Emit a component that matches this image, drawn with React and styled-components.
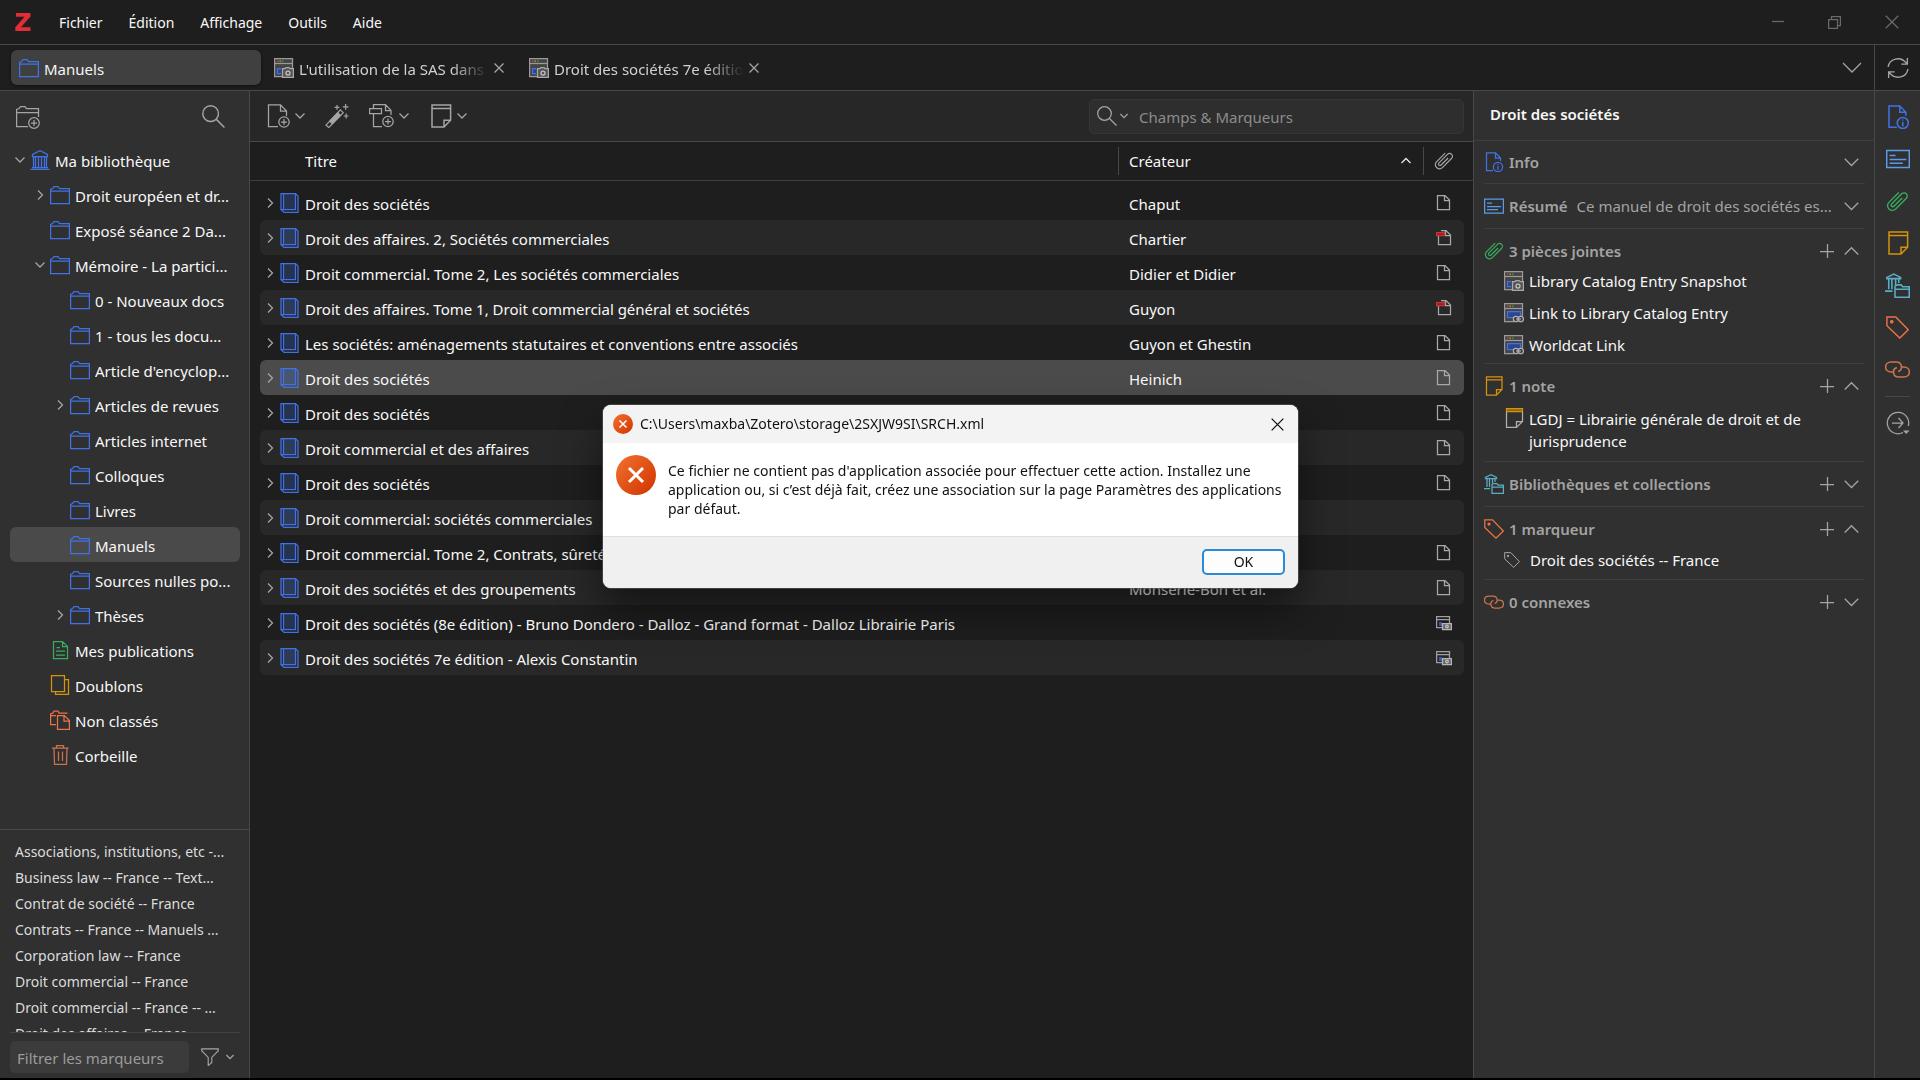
import React from "react";
import styled, { createGlobalStyle, css } from "styled-components";

const BLUE = "#4072e5";
const LIGHT_BLUE = "#5a9ae6";
const GREEN = "#39ac5e";
const YELLOW = "#d5920b";
const TEAL = "#59adc4";
const ORANGE = "#ec7147";
const BROWN = "#c9744b";
const GREY = "#a5a5a5";

const GlobalStyle = createGlobalStyle`
  * {
    box-sizing: border-box;
  }
  body {
    margin: 0;
    background: #000;
    color: #f8f8f8;
    font-family: "Noto Sans", "Open Sans", sans-serif;
    font-size: 15px;
    line-height: 22px;
  }
  button,
  input {
    font: inherit;
    color: inherit;
  }
  button {
    padding: 0;
    border: 0;
    background: none;
    text-align: left;
  }
  ul {
    margin: 0;
    padding: 0;
    list-style: none;
  }
`;

/* ---------- icons ---------- */

const Svg = styled.svg`
  flex: none;
  display: block;
  fill: none;
  stroke: currentColor;
  stroke-width: 1.25;
`;

const Icon = ({ size = 20, color, box = 20, children }) => (
  <Svg width={size} height={size} viewBox={`0 0 ${box} ${box}`} color={color} aria-hidden="true">
    {children}
  </Svg>
);

const FolderIcon = () => (
  <Icon color={BLUE}>
    <path d="M.6 18.5V4.5L2.5 3.5L4 1.5H8L9.5 3.5H19.4V18.5zM.6 6H19.4" />
  </Icon>
);

const FolderPlusIcon = () => (
  <Icon size={24} box={24} color={GREY}>
    <path d="M12 21.5H.6V4.5L3 3.5L4.5 1.5H9L10.5 3.5H22.5V12M.6 7.5H22.5" />
    <circle cx="18" cy="18" r="5.3" />
    <path d="M18 15v6M15 18h6" />
  </Icon>
);

const LibraryIcon = () => (
  <Icon color={BLUE}>
    <path d="M.5 19.4H19.5M2 17.5H18M2.5 6.5V4.5L10 .8L17.5 4.5V6.5zM3.5 6.5V17M5.5 6.5V17M8.5 6.5V17M11.5 6.5V17M14.5 6.5V17M16.5 6.5V17" />
  </Icon>
);

const BookIcon = () => (
  <Icon color={BLUE}>
    <path d="M3.5 .6H15.5V16.5H3.5z" fill="#4072e5" fillOpacity=".25" stroke="none" />
    <path d="M1 .6H15.5V16.5H1zM3.5.6V16.5M1 16.5L4 19.4H18V3L15.5 .6" />
  </Icon>
);

const PublicationsIcon = () => (
  <Icon color={GREEN}>
    <path d="M3.5 1.5H12.5L17.5 6.5V18.5H3.5zM12.5 1.5V6.5H17.5M6.5 7.5H10M6 11H15M6 15H15" />
  </Icon>
);

const DuplicatesIcon = () => (
  <Icon color={YELLOW}>
    <path d="M1.5.6H14.5V16.5H1.5zM14.5 4.5H18.5V19.4H5.5V16.5" />
  </Icon>
);

const UnfiledIcon = () => (
  <Icon color={ORANGE}>
    <path d="M6 14.5H.6V4L3 3L4 1H8L9 3H17.5M.6 5.5H6M7.5 5.5H14.5L19.4 10.5V19.4H7.5zM14 5.5V11H19.5" />
  </Icon>
);

const TrashIcon = () => (
  <Icon color={BROWN}>
    <path d="M2 3H18.5M6.5 3V.6H13.5V3M4 3.5L4.5 19.4H16.5L17 3.5M8.5 6.5V16M12.5 6.5V16" />
  </Icon>
);

const WindowShape = () => (
  <>
    <path d="M.6.6H18.5V18.5H.6z" fill="#444" stroke="#9a9a9a" />
    <path d="M.5 5.5H18.5" stroke="#9a9a9a" />
    <path d="M3 3H4.5" stroke="#e0403a" />
    <path d="M5.5 3H7" stroke="#d8a000" />
    <path d="M8 3H9.5" stroke="#35a34a" />
  </>
);

const SnapshotIcon = () => (
  <Icon>
    <WindowShape />
    <path d="M7 10.5H3.5V15.5H7" stroke={BLUE} fill="#2c478c" />
    <path d="M8.5 10.5H11L12 9.5H15L16 10.5H19.4V19.4H8.5z" fill="#555" stroke="#a9a9a9" />
    <circle cx="14" cy="15" r="2" stroke="#c4c4c4" />
  </Icon>
);

const WebLinkIcon = () => (
  <Icon>
    <WindowShape />
    <path d="M3.5 8.5H16.5V14.5H3.5z" stroke={BLUE} fill="#2c478c" />
    <path d="M10 13.5H19.5V19.5H10z" fill="#333" stroke="none" />
    <circle cx="12" cy="16" r="2.6" stroke="#b0b0b0" />
    <circle cx="16.8" cy="16" r="2.6" stroke="#b0b0b0" />
    <path d="M12 16h5" stroke="#b0b0b0" />
  </Icon>
);

const SmallSnapshotIcon = () => (
  <Icon size={16} box={16}>
    <path d="M.6 1.5H13.5V12.5H.6zM.6 4.5H13.5" stroke="#a0a0a0" />
    <path d="M3 7H6V11H3z" fill="#3458b5" stroke="none" />
    <path d="M6.5 8.5H15.4V14.5H6.5z" fill="#666" stroke="#b5b5b5" />
    <circle cx="11" cy="11.5" r="1.3" stroke="#c4c4c4" />
  </Icon>
);

const FileIcon = () => (
  <Icon size={16} box={16} color="#a8a8a8">
    <path d="M1.5.6H9L13.5 5V14.5H1.5zM8.5 .6V5.5H13.5" />
  </Icon>
);

const PdfIcon = () => (
  <Icon size={16} box={16} color="#a8a8a8">
    <path d="M2.5 6V14.5H14.5V5L10 .6H5M9.5 .6V5.5H14.5" />
    <path d="M.6 2.5H8.5V5.5H.6z" stroke="#cf3038" fill="#8c2228" />
  </Icon>
);

const InfoIcon = ({ size }) => (
  <Icon size={size} color={BLUE}>
    <path d="M9 18.5H2.5V.8H11.5L16.5 6V9M11.5 .8V6H16.5" />
    <circle cx="14" cy="15" r="4.6" />
    <path d="M14 14v4M14 12v1" />
  </Icon>
);

const AbstractIcon = ({ size }) => (
  <Icon size={size} color={LIGHT_BLUE}>
    <path d="M.6 3H19.4V17H.6zM3 7H8M3 10.5H17M3 13.5H14" />
  </Icon>
);

const ClipIcon = ({ size, color = GREEN }) => (
  <Icon size={size} color={color}>
    <path d="M14.5 7.5L7.2 14.8C5.6 16.4 3.4 14.2 5 12.6L13.8 3.8C16.8.8 21 5 18 8L8.8 17.2C4.6 21.4-1.6 15.4 2.6 11.2L11.4 2.4" transform="translate(.2 -.2) scale(.96)" />
  </Icon>
);

const NoteIcon = ({ size, color = YELLOW }) => (
  <Icon size={size} color={color}>
    <path d="M2.5.8H18V13.5L12.5 19.2H2.5zM2.5 3.8H18M18 13.5H12.5V19.2" />
  </Icon>
);

const NoteItemIcon = () => (
  <Icon color="#b0b0b0">
    <path d="M2.5 4V19.4H12.5L18.5 13.5V4M18.5 13.5H12.5V19.4" />
    <path d="M2.5 .6H18.5V3.5H2.5z" fill="#8a6414" stroke={YELLOW} />
  </Icon>
);

const CollectionsIcon = ({ size }) => (
  <Icon size={size} color={TEAL}>
    <path d="M0 14.5H6M1.5 4.5V3.5L7 .8L12.5 3.5V4.5zM3 5V13M5.5 5V13M8.5 5V9.5M11 5V8" />
    <path d="M8 19.4V10.5L10 9.5H13L14 11H19.4V19.4zM8 13H19.4" />
  </Icon>
);

const TagIcon = ({ size, color = ORANGE }) => (
  <Icon size={size} color={color}>
    <path d="M.8.8H8.5L19.3 12L12 19.2L.8 8.5z" />
    <circle cx="5" cy="5" r="1" fill="currentColor" />
  </Icon>
);

const LinkedIcon = ({ size }) => (
  <Icon size={size} color={BROWN}>
    <path d="M6.5 12H5C-1 12-1 4 5 4H9C14 4 14.5 10.5 10.5 11.5M13.5 8H15C21 8 21 16 15 16H11C6 16 5.5 9.5 9.5 8.5" />
  </Icon>
);

const LocateIcon = () => (
  <Icon size={24} box={24} color={GREY}>
    <path d="M17 21.5A10.7 10.7 0 1 1 22.3 15M6 12H17M12.5 7L17 12L12.5 17" />
    <path d="M17 19.5H23.5L20.2 23z" fill="currentColor" stroke="none" />
  </Icon>
);

const SyncIcon = () => (
  <Icon size={22} color={GREY}>
    <path d="M1 9C2 2 12-2 18 6M18.5 1V6.5H13M19 11C18 18 8 22 2 14M1.5 19V13.5H7" />
  </Icon>
);

const SearchIcon = ({ size = 20, color = GREY }) => (
  <Icon size={size} color={color}>
    <circle cx="7.5" cy="7.5" r="6.8" />
    <path d="M12.5 12.5L19.5 19.5" />
  </Icon>
);

const AddItemIcon = () => (
  <Icon size={24} box={24} color={GREY}>
    <path d="M11 22.5H1.5V.8H13.5L19.5 7V12M13.5 .8V7H19.5" />
    <circle cx="17" cy="18" r="5.2" />
    <path d="M17 15v6M14 18h6" />
  </Icon>
);

const WandIcon = () => (
  <Icon size={24} box={25} color={GREY}>
    <path d="M1 22L16 6L19 9L4 24.4z" />
    <path d="M5 18L13.5 9L16 12L7.5 20.5z" fill="currentColor" />
    <path d="M12.5 1v5M10 3.5h5M21.5 0v6M18.5 3h6M22 10v5M19.5 12.5h5" />
  </Icon>
);

const AddAttachmentIcon = () => (
  <Icon size={26} box={26} color={GREY}>
    <path d="M.6 5.5H12.5V10.5H.6zM4.5 5V1.5H16.5L22 7.5V12M16.5 1.5V7.5H22M4.5 10.5V23.5H13" />
    <circle cx="19" cy="18.5" r="5.2" />
    <path d="M19 15.5v6M16 18.5h6" />
  </Icon>
);

const Chevron = ({ size = 10, dir = "down", color = GREY }) => {
  const paths = {
    down: "M.5 2.5L5 7L9.5 2.5",
    up: "M.5 7L5 2.5L9.5 7",
    right: "M3 .5L7.5 5L3 9.5",
  };
  return (
    <Svg width={size} height={size} viewBox="0 0 10 10" color={color} aria-hidden="true">
      <path d={paths[dir]} vectorEffect="non-scaling-stroke" />
    </Svg>
  );
};

const CrossIcon = ({ size = 10, color = GREY }) => (
  <Svg width={size} height={size} viewBox="0 0 10 10" color={color} aria-hidden="true">
    <path d="M.5.5L9.5 9.5M9.5.5L.5 9.5" vectorEffect="non-scaling-stroke" />
  </Svg>
);

const ErrorIcon = ({ size }) => (
  <Svg width={size} height={size} viewBox="0 0 40 40" aria-hidden="true">
    <defs>
      <linearGradient id={`err${size}`} x1="0" y1="0" x2="1" y2="1">
        <stop offset="0" stopColor="#f3722f" />
        <stop offset="1" stopColor="#cf3300" />
      </linearGradient>
    </defs>
    <circle cx="20" cy="20" r="20" fill={`url(#err${size})`} stroke="none" />
    <path d="M13 13L27 27M27 13L13 27" stroke="#fff" strokeWidth="3" />
  </Svg>
);

/* ---------- data ---------- */

const menus = ["Fichier", "Édition", "Affichage", "Outils", "Aide"];

const tree = [
  { label: "Ma bibliothèque", level: 0, icon: <LibraryIcon />, twisty: "down" },
  { label: "Droit européen et dr...", level: 1, twisty: "right" },
  { label: "Exposé séance 2 Da...", level: 1 },
  { label: "Mémoire - La partici...", level: 1, twisty: "down" },
  { label: "0 - Nouveaux docs", level: 2 },
  { label: "1 - tous les docu...", level: 2 },
  { label: "Article d'encyclop...", level: 2 },
  { label: "Articles de revues", level: 2, twisty: "right" },
  { label: "Articles internet", level: 2 },
  { label: "Colloques", level: 2 },
  { label: "Livres", level: 2 },
  { label: "Manuels", level: 2, selected: true },
  { label: "Sources nulles po...", level: 2 },
  { label: "Thèses", level: 2, twisty: "right" },
  { label: "Mes publications", level: 1, icon: <PublicationsIcon /> },
  { label: "Doublons", level: 1, icon: <DuplicatesIcon /> },
  { label: "Non classés", level: 1, icon: <UnfiledIcon /> },
  { label: "Corbeille", level: 1, icon: <TrashIcon /> },
];

const tags = [
  "Associations, institutions, etc -...",
  "Business law -- France -- Text...",
  "Contrat de société -- France",
  "Contrats -- France -- Manuels ...",
  "Corporation law -- France",
  "Droit commercial -- France",
  "Droit commercial -- France -- ...",
  "Droit des affaires -- France",
];

const items = [
  { title: "Droit des sociétés", creator: "Chaput", file: "file" },
  { title: "Droit des affaires. 2, Sociétés commerciales", creator: "Chartier", file: "pdf" },
  { title: "Droit commercial. Tome 2, Les sociétés commerciales", creator: "Didier et Didier", file: "file" },
  { title: "Droit des affaires. Tome 1, Droit commercial général et sociétés", creator: "Guyon", file: "pdf" },
  { title: "Les sociétés: aménagements statutaires et conventions entre associés", creator: "Guyon et Ghestin", file: "file" },
  { title: "Droit des sociétés", creator: "Heinich", file: "file", selected: true },
  { title: "Droit des sociétés", file: "file" },
  { title: "Droit commercial et des affaires", file: "file" },
  { title: "Droit des sociétés", file: "file" },
  { title: "Droit commercial: sociétés commerciales" },
  { title: "Droit commercial. Tome 2, Contrats, sûretés", file: "file" },
  { title: "Droit des sociétés et des groupements", creator: "Monserié-Bon et al.", file: "file" },
  { title: "Droit des sociétés (8e édition) - Bruno Dondero - Dalloz - Grand format - Dalloz Librairie Paris", file: "snapshot" },
  { title: "Droit des sociétés 7e édition - Alexis Constantin", file: "snapshot" },
];

const fileIcons = {
  file: <FileIcon />,
  pdf: <PdfIcon />,
  snapshot: <SmallSnapshotIcon />,
};

/* ---------- window frame ---------- */

const Window = styled.div`
  display: flex;
  flex-direction: column;
  height: calc(100vh - 2px);
  background: #1e1e1e;
`;

const MenuBar = styled.header`
  display: flex;
  align-items: center;
  height: 45px;
  padding-left: 15px;
  border-bottom: 1px solid #484848;
`;

const MenuList = styled.nav`
  display: flex;
  flex: 1;
  gap: 26px;
  margin-left: 28px;
  padding-top: 2px;
  font-size: 14px;
`;

const WindowButtons = styled.div`
  display: flex;
  color: #6a6a6a;
`;

const WindowButton = styled.button`
  display: flex;
  align-items: center;
  justify-content: center;
  width: 57px;
  height: 44px;
`;

const TabBar = styled.div`
  display: flex;
  height: 46px;
  border-bottom: 1px solid #484848;
`;

const Tabs = styled.div`
  display: flex;
  flex: 1;
  align-items: center;
  gap: 5px;
  padding-left: 11px;
`;

const Tab = styled.div`
  display: flex;
  align-items: center;
  gap: 5px;
  width: 250px;
  height: 35px;
  padding: 0 12px 0 8px;
  border-radius: 6px;
  color: #d0d0d0;
  ${({ $active }) =>
    $active &&
    css`
      background: #404040;
      color: #f4f4f4;
      box-shadow: 0 1px 3px rgba(0, 0, 0, 0.5);
    `}
`;

const TabTitle = styled.button`
  flex: 1;
  padding-top: 2px;
  overflow: hidden;
  white-space: nowrap;
  ${({ $fade }) => $fade && "mask-image: linear-gradient(to right, #000 80%, transparent);"}
`;

const TabsMenu = styled.button`
  display: flex;
  align-items: center;
  padding: 0 12px;
`;

const SyncButton = styled.button`
  display: flex;
  align-items: center;
  justify-content: center;
  width: 46px;
  border-left: 1px solid #484848;
`;

const Main = styled.div`
  display: flex;
  flex: 1;
  min-height: 0;
`;

/* ---------- collections ---------- */

const Sidebar = styled.aside`
  display: flex;
  flex-direction: column;
  flex: none;
  width: 250px;
  border-right: 1px solid #484848;
  background: #303030;
`;

const SidebarTools = styled.div`
  display: flex;
  align-items: center;
  justify-content: space-between;
  height: 51px;
  padding: 0 24px 0 16px;
`;

const Tree = styled.ul`
  flex: 1;
  padding: 0 9px 0 10px;
  overflow: hidden;
`;

const TreeRow = styled.button`
  display: flex;
  align-items: center;
  gap: 5px;
  width: 100%;
  height: 35px;
  padding-left: ${({ $level }) => 5 + $level * 20}px;
  border-radius: 6px;
  background: ${({ $selected }) => ($selected ? "#4a4a4a" : "none")};
`;

const Twisty = styled.span`
  flex: none;
  width: 10px;
`;

const Ellipsis = styled.span`
  flex: 1;
  padding-top: 2px;
  overflow: hidden;
  white-space: nowrap;
  text-overflow: ellipsis;
`;

const TagPanel = styled.section`
  display: flex;
  flex-direction: column;
  flex: none;
  height: 249px;
  border-top: 1px solid #484848;
`;

const TagList = styled.ul`
  flex: 1;
  margin: 0 9px 0 10px;
  padding-top: 9px;
  overflow: hidden;
  border-bottom: 1px solid #434343;
`;

const TagRow = styled.li`
  height: 26px;
  padding-left: 5px;
  overflow: hidden;
  color: #dcdcdc;
  font-size: 14px;
  line-height: 26px;
  white-space: nowrap;
  text-overflow: ellipsis;
`;

const TagFilter = styled.div`
  display: flex;
  align-items: center;
  gap: 6px;
  padding: 8px 15px 5px 10px;
`;

const FilterInput = styled.input`
  flex: 1;
  min-width: 0;
  height: 32px;
  margin-right: 6px;
  padding: 2px 7px 0;
  border: 0;
  border-radius: 5px;
  background: #3b3b3b;
  &::placeholder {
    color: #9b9b9b;
    opacity: 1;
  }
`;

const FilterButton = styled.button`
  display: flex;
  align-items: center;
  gap: 7px;
`;

/* ---------- items ---------- */

const ItemsPane = styled.main`
  flex: 1;
  min-width: 0;
  overflow: hidden;
`;

const Toolbar = styled.div`
  display: flex;
  align-items: center;
  gap: 20px;
  height: 51px;
  padding: 0 9px 0 17px;
  border-bottom: 1px solid #484848;
  background: #272727;
`;

const ToolButton = styled.button`
  display: flex;
  align-items: center;
  gap: 4px;
`;

const SearchBox = styled.label`
  display: flex;
  align-items: center;
  gap: 3px;
  width: 375px;
  height: 35px;
  margin-left: auto;
  padding: 0 7px;
  border: 1px solid #353535;
  border-radius: 5px;
  background: #2e2e2e;
`;

const SearchInput = styled.input`
  flex: 1;
  min-width: 0;
  margin-left: 8px;
  padding: 2px 0 0;
  border: 0;
  outline: 0;
  background: none;
  &::placeholder {
    color: #8c8c8c;
    opacity: 1;
  }
`;

const Table = styled.table`
  display: block;
`;

const Head = styled.thead`
  display: block;
  padding: 0 9px 0 10px;
  border-bottom: 1px solid #3e3e3e;
`;

const Body = styled.tbody`
  display: block;
  padding: 4px 9px 0 10px;
`;

const rowColumns = css`
  display: grid;
  grid-template-columns: minmax(0, 1fr) 305px 41px;
  align-items: center;
`;

const HeadRow = styled.tr`
  ${rowColumns}
  height: 38px;
`;

const HeadCell = styled.th`
  display: flex;
  align-items: center;
  justify-content: space-between;
  height: 28px;
  padding: 0 12px 0 ${({ $first }) => ($first ? 45 : 10)}px;
  border-left: ${({ $first }) => ($first ? "0" : "1px solid #484848")};
  font-weight: 400;
`;

const Row = styled.tr`
  ${rowColumns}
  height: 35px;
  border-radius: 6px;
  &:nth-child(even) {
    background: #282828;
  }
  ${({ $selected }) =>
    $selected &&
    css`
      && {
        background: #4b4b4b;
      }
    `}
`;

const TitleCell = styled.td`
  display: flex;
  align-items: center;
  gap: 5px;
  min-width: 0;
  padding: 0 5px;
`;

const Cell = styled.td`
  padding: 2px 11px 0;
`;

const FileCell = styled.td`
  display: flex;
  padding: 0 0 0 13px;
`;

/* ---------- item details ---------- */

const Details = styled.aside`
  flex: none;
  width: 401px;
  border-left: 1px solid #484848;
  background: #303030;
`;

const DetailsTitle = styled.h1`
  height: 50px;
  margin: 0;
  padding: 0 16px;
  border-bottom: 1px solid #3e3e3e;
  font-size: 15px;
  font-weight: 600;
  line-height: 46px;
`;

const Sections = styled.div`
  padding: 0 9px 0 10px;
`;

const Section = styled.section`
  padding: 8px 0 ${({ $open }) => ($open ? 2 : 8)}px;
  border-bottom: 1px solid #3e3e3e;
  &:first-child {
    padding: 7px 0;
  }
  &:last-child {
    border: 0;
  }
`;

const SectionHead = styled.div`
  display: flex;
  align-items: center;
  gap: 5px;
  height: 28px;
  padding-right: 6px;
  color: #a3a3a3;
`;

const SectionName = styled.h2`
  margin: 0;
  font-size: 15px;
  font-weight: 600;
  line-height: 22px;
`;

const Summary = styled(Ellipsis)`
  margin-left: 4px;
  padding-top: 0;
`;

const SectionTools = styled.div`
  display: flex;
  align-items: center;
  gap: 10px;
  margin-left: auto;
`;

const DetailRow = styled.button`
  display: flex;
  align-items: center;
  gap: 5px;
  width: 100%;
  height: 32px;
  padding-left: 20px;
`;

const NoteRow = styled(DetailRow)`
  align-items: flex-start;
  height: auto;
  padding: 8px 40px 7px 20px;
`;

const TagDetailRow = styled(DetailRow)`
  gap: 10px;
  height: 34px;
`;

const SideNav = styled.nav`
  display: flex;
  flex-direction: column;
  align-items: center;
  flex: none;
  width: 46px;
  padding-top: 5px;
  border-left: 1px solid #484848;
  background: #303030;
`;

const NavButton = styled.button`
  display: flex;
  align-items: center;
  justify-content: center;
  width: 42px;
  height: 42px;
`;

const NavDivider = styled.hr`
  width: 25px;
  margin: 6px 0 5px;
  border: 0;
  border-top: 1px solid #484848;
`;

/* ---------- dialog ---------- */

const Dialog = styled.div`
  position: fixed;
  top: 405px;
  left: 603px;
  width: 695px;
  overflow: hidden;
  border-radius: 8px;
  background: #fff;
  color: #111;
  box-shadow: 0 0 0 1px rgba(90, 90, 90, 0.6), 0 20px 40px rgba(0, 0, 0, 0.5);
`;

const DialogBar = styled.div`
  display: flex;
  align-items: center;
  gap: 7px;
  height: 38px;
  padding: 0 14px 0 10px;
  background: #f3f3f3;
  font-size: 14px;
`;

const DialogClose = styled.button`
  margin-left: auto;
`;

const DialogBody = styled.div`
  display: flex;
  gap: 12px;
  height: 94px;
  padding: 12px 12px 0 13px;
  border-bottom: 1px solid #dfdfdf;
`;

const DialogText = styled.p`
  margin: 0;
  padding-top: 6px;
  font-size: 14px;
  line-height: 19px;
`;

const DialogFooter = styled.div`
  display: flex;
  justify-content: flex-end;
  padding: 12px 13px 13px;
  background: #f0f0f0;
`;

const OkButton = styled.button`
  width: 83px;
  height: 26px;
  border: 2px solid #2a8ad6;
  border-radius: 5px;
  background: #fdfdfd;
  font-size: 14px;
  line-height: 20px;
  text-align: center;
`;

const PlusButton = () => (
  <button aria-label="Ajouter">
    <Icon size={14} box={14} color={GREY}>
      <path d="M7.5 0V14M0 7.5H14" />
    </Icon>
  </button>
);

const PaneSection = ({ icon, name, summary, open, add, children }) => (
  <Section $open={open}>
    <SectionHead>
      {icon}
      <SectionName>{name}</SectionName>
      {summary && <Summary>{summary}</Summary>}
      <SectionTools>
        {add && <PlusButton />}
        <button aria-label={name}>
          <Chevron size={15} dir={open ? "up" : "down"} />
        </button>
      </SectionTools>
    </SectionHead>
    {children}
  </Section>
);

const CollectionsPane = () => (
  <Sidebar>
    <SidebarTools>
      <button aria-label="Nouvelle collection">
        <FolderPlusIcon />
      </button>
      <button aria-label="Filtrer les collections">
        <SearchIcon size={23} />
      </button>
    </SidebarTools>
    <Tree>
      {tree.map((node) => (
        <li key={node.label}>
          <TreeRow $level={node.level} $selected={node.selected}>
            <Twisty>{node.twisty && <Chevron dir={node.twisty} />}</Twisty>
            {node.icon || <FolderIcon />}
            <Ellipsis>{node.label}</Ellipsis>
          </TreeRow>
        </li>
      ))}
    </Tree>
    <TagPanel>
      <TagList>
        {tags.map((tag) => (
          <TagRow key={tag}>{tag}</TagRow>
        ))}
      </TagList>
      <TagFilter>
        <FilterInput placeholder="Filtrer les marqueurs" aria-label="Filtrer les marqueurs" />
        <FilterButton aria-label="Options des marqueurs">
          <Icon color={GREY} size={18}>
            <path d="M.8 1H19.2V3L12 10.5V16L8 19.5V10.5L.8 3z" />
          </Icon>
          <Chevron size={8} />
        </FilterButton>
      </TagFilter>
    </TagPanel>
  </Sidebar>
);

const ItemsTable = () => (
  <Table>
    <Head>
      <HeadRow>
        <HeadCell $first>Titre</HeadCell>
        <HeadCell>
          Créateur
          <Chevron dir="up" color="#e8e8e8" />
        </HeadCell>
        <HeadCell aria-label="Pièces jointes">
          <ClipIcon color={GREY} />
        </HeadCell>
      </HeadRow>
    </Head>
    <Body>
      {items.map((item, index) => (
        <Row key={index} $selected={item.selected}>
          <TitleCell>
            <Chevron dir="right" />
            <BookIcon />
            <Ellipsis>{item.title}</Ellipsis>
          </TitleCell>
          <Cell>{item.creator}</Cell>
          <FileCell>{fileIcons[item.file]}</FileCell>
        </Row>
      ))}
    </Body>
  </Table>
);

const ErrorDialog = () => (
  <Dialog role="alertdialog" aria-labelledby="dialog-title">
    <DialogBar>
      <ErrorIcon size={20} />
      <span id="dialog-title">C:\Users\maxba\Zotero\storage\2SXJW9SI\SRCH.xml</span>
      <DialogClose aria-label="Fermer">
        <CrossIcon size={13} color="#111" />
      </DialogClose>
    </DialogBar>
    <DialogBody>
      <ErrorIcon size={40} />
      <DialogText>
        Ce fichier ne contient pas d'application associée pour effectuer cette action. Installez une
        <br />
        application ou, si c’est déjà fait, créez une association sur la page Paramètres des applications
        <br />
        par défaut.
      </DialogText>
    </DialogBody>
    <DialogFooter>
      <OkButton>OK</OkButton>
    </DialogFooter>
  </Dialog>
);

const App = () => {
  return (
    <Window>
      <GlobalStyle />
      <MenuBar>
        <Svg width="16" height="18" viewBox="0 0 16 18" aria-hidden="true">
          <path d="M1 0H15.5V3.5L6 14.3H15.5V18H.3V14.3L9.6 3.7H1z" fill="#e12d37" stroke="none" />
        </Svg>
        <MenuList>
          {menus.map((menu) => (
            <button key={menu}>{menu}</button>
          ))}
        </MenuList>
        <WindowButtons>
          <WindowButton aria-label="Réduire">
            <Icon size={12} box={12}>
              <path d="M0 5.5H12" />
            </Icon>
          </WindowButton>
          <WindowButton aria-label="Restaurer">
            <Icon size={13} box={13}>
              <path d="M.6 3.5H9.5V12.4H.6zM3.5 3V.6H12.4V9.5H10" />
            </Icon>
          </WindowButton>
          <WindowButton aria-label="Fermer la fenêtre">
            <CrossIcon size={14} color="#6a6a6a" />
          </WindowButton>
        </WindowButtons>
      </MenuBar>

      <TabBar>
        <Tabs>
          <Tab $active>
            <FolderIcon />
            <TabTitle>Manuels</TabTitle>
          </Tab>
          {["L'utilisation de la SAS dans", "Droit des sociétés 7e édition"].map((title) => (
            <Tab key={title}>
              <SnapshotIcon />
              <TabTitle $fade>{title}</TabTitle>
              <button aria-label="Fermer l'onglet">
                <CrossIcon />
              </button>
            </Tab>
          ))}
        </Tabs>
        <TabsMenu aria-label="Liste des onglets">
          <Chevron size={20} />
        </TabsMenu>
        <SyncButton aria-label="Synchroniser">
          <SyncIcon />
        </SyncButton>
      </TabBar>

      <Main>
        <CollectionsPane />

        <ItemsPane>
          <Toolbar>
            <ToolButton aria-label="Nouveau document">
              <AddItemIcon />
              <Chevron />
            </ToolButton>
            <ToolButton aria-label="Ajouter par identifiant">
              <WandIcon />
            </ToolButton>
            <ToolButton aria-label="Ajouter une pièce jointe">
              <AddAttachmentIcon />
              <Chevron />
            </ToolButton>
            <ToolButton aria-label="Nouvelle note">
              <NoteIcon size={24} color={GREY} />
              <Chevron />
            </ToolButton>
            <SearchBox>
              <SearchIcon />
              <Chevron size={8} />
              <SearchInput placeholder="Champs &amp; Marqueurs" aria-label="Champs &amp; Marqueurs" />
            </SearchBox>
          </Toolbar>
          <ItemsTable />
        </ItemsPane>

        <Details>
          <DetailsTitle>Droit des sociétés</DetailsTitle>
          <Sections>
            <PaneSection icon={<InfoIcon />} name="Info" />
            <PaneSection
              icon={<AbstractIcon />}
              name="Résumé"
              summary="Ce manuel de droit des sociétés es..."
            />
            <PaneSection icon={<ClipIcon />} name="3 pièces jointes" open add>
              <DetailRow>
                <SnapshotIcon />
                Library Catalog Entry Snapshot
              </DetailRow>
              <DetailRow>
                <WebLinkIcon />
                Link to Library Catalog Entry
              </DetailRow>
              <DetailRow>
                <WebLinkIcon />
                Worldcat Link
              </DetailRow>
            </PaneSection>
            <PaneSection icon={<NoteIcon />} name="1 note" open add>
              <NoteRow>
                <NoteItemIcon />
                LGDJ = Librairie générale de droit et de jurisprudence
              </NoteRow>
            </PaneSection>
            <PaneSection icon={<CollectionsIcon />} name="Bibliothèques et collections" add />
            <PaneSection icon={<TagIcon />} name="1 marqueur" open add>
              <TagDetailRow>
                <TagIcon size={16} color={GREY} />
                Droit des sociétés -- France
              </TagDetailRow>
            </PaneSection>
            <PaneSection icon={<LinkedIcon />} name="0 connexes" add />
          </Sections>
        </Details>

        <SideNav>
          <NavButton aria-label="Info">
            <InfoIcon size={24} />
          </NavButton>
          <NavButton aria-label="Résumé">
            <AbstractIcon size={24} />
          </NavButton>
          <NavButton aria-label="Pièces jointes">
            <ClipIcon size={23} />
          </NavButton>
          <NavButton aria-label="Notes">
            <NoteIcon size={24} />
          </NavButton>
          <NavButton aria-label="Bibliothèques et collections">
            <CollectionsIcon size={25} />
          </NavButton>
          <NavButton aria-label="Marqueurs">
            <TagIcon size={23} />
          </NavButton>
          <NavButton aria-label="Connexes">
            <LinkedIcon size={25} />
          </NavButton>
          <NavDivider />
          <NavButton aria-label="Localiser">
            <LocateIcon />
          </NavButton>
        </SideNav>
      </Main>

      <ErrorDialog />
    </Window>
  );
};

export default App;
